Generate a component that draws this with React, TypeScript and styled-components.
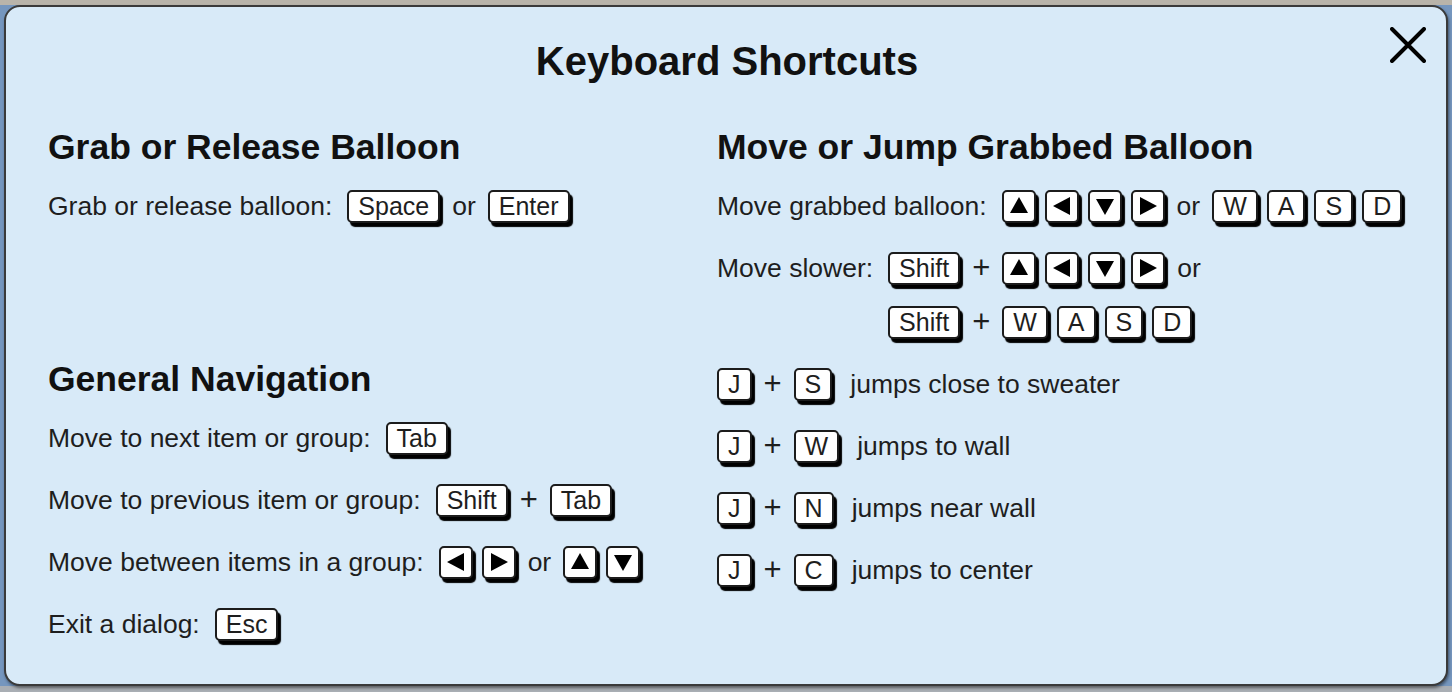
import React from "react";
import styled, { createGlobalStyle } from "styled-components";

const GlobalStyle = createGlobalStyle`
  html, body {
    margin: 0;
    padding: 0;
    background: #7596be;
  }
  body {
    font-family: "Liberation Sans", Arial, sans-serif;
    color: #1e1e1e;
  }
`;

const Backdrop = styled.div`
  box-sizing: border-box;
  width: 1452px;
  height: 692px;
  padding: 5px 4px 6px 4px;
  background: linear-gradient(
    to bottom,
    #b9b4aa 0px,
    #b9b4aa 5px,
    #7596be 5px,
    #7596be 686px,
    #a9aeb4 686px
  );
  overflow: hidden;
`;

const Dialog = styled.div`
  position: relative;
  box-sizing: border-box;
  height: 681px;
  background: #d8eaf8;
  border: 2px solid #3a3a3a;
  border-radius: 16px;
  box-shadow: 1px 2px 3px rgba(0, 0, 0, 0.45);
  padding: 30px 40px 0 42px;
`;

const Title = styled.h1`
  margin: 0;
  text-align: center;
  font-size: 40px;
  line-height: 48px;
  font-weight: 700;
  color: #111;
`;

const CloseButton = styled.button`
  position: absolute;
  top: 20px;
  right: 20px;
  width: 36px;
  height: 36px;
  padding: 0;
  border: none;
  background: transparent;
  display: flex;
  align-items: center;
  justify-content: center;
  cursor: pointer;
`;

const Columns = styled.div`
  display: grid;
  grid-template-columns: 669px 1fr;
  margin-top: 41px;
`;

const Column = styled.div`
  display: flex;
  flex-direction: column;
  gap: 134px;
`;

const Section = styled.section`
  display: flex;
  flex-direction: column;
`;

const Heading = styled.h2`
  margin: 0 0 20px 0;
  font-size: 35.5px;
  line-height: 42px;
  font-weight: 700;
  color: #111;
`;

const Rows = styled.div`
  display: flex;
  flex-direction: column;
  gap: 26px;
`;

const Row = styled.div<{ $top?: boolean }>`
  display: flex;
  align-items: ${(p) => (p.$top ? "flex-start" : "center")};
  gap: 12px;
  min-height: 36px;
  font-size: 26.5px;
  line-height: 30px;
  white-space: nowrap;
`;

const Label = styled.span<{ $top?: boolean }>`
  margin-right: 3px;
  margin-top: ${(p) => (p.$top ? "3px" : "0")};
`;

const Word = styled.span`
  font-size: 26.5px;
`;

const Plus = styled.span`
  font-size: 31px;
  font-weight: 400;
  color: #1e1e1e;
`;

const Description = styled.span`
  margin-left: 6px;
`;

const Lines = styled.div`
  display: flex;
  flex-direction: column;
  gap: 18px;
`;

const Line = styled.div`
  display: flex;
  align-items: center;
  gap: 12px;
  min-height: 36px;
`;

const KeyGroup = styled.span`
  display: inline-flex;
  align-items: center;
  gap: 9px;
`;

const Key = styled.kbd<{ $arrow?: boolean }>`
  display: inline-flex;
  align-items: center;
  justify-content: center;
  box-sizing: border-box;
  height: 33px;
  width: ${(p) => (p.$arrow ? "34px" : "auto")};
  padding: ${(p) => (p.$arrow ? "0" : "0 9px")};
  border: 2px solid #1c1c1c;
  border-radius: 5px;
  background: #fff;
  box-shadow: 3px 4px 1px #000;
  font-family: "Liberation Sans", Arial, sans-serif;
  font-size: 25px;
  line-height: 1;
  color: #1e1e1e;
`;

type Dir = "up" | "left" | "down" | "right";

const trianglePoints: Record<Dir, string> = {
  up: "0,16 9,0 18,16",
  down: "0,2 18,2 9,18",
  left: "17,0 17,18 0,9",
  right: "1,0 1,18 18,9",
};

const Arrow: React.FC<{ dir: Dir }> = ({ dir }) => (
  <Key $arrow>
    <svg width="18" height="18" viewBox="0 0 18 18" aria-label={dir}>
      <polygon points={trianglePoints[dir]} fill="#000" />
    </svg>
  </Key>
);

const Arrows: React.FC<{ dirs: Dir[] }> = ({ dirs }) => (
  <KeyGroup>
    {dirs.map((d) => (
      <Arrow key={d} dir={d} />
    ))}
  </KeyGroup>
);

const Keys: React.FC<{ keys: string[] }> = ({ keys }) => (
  <KeyGroup>
    {keys.map((k) => (
      <Key key={k}>{k}</Key>
    ))}
  </KeyGroup>
);

const ALL: Dir[] = ["up", "left", "down", "right"];
const WASD = ["W", "A", "S", "D"];

const jumps: [string, string][] = [
  ["S", "jumps close to sweater"],
  ["W", "jumps to wall"],
  ["N", "jumps near wall"],
  ["C", "jumps to center"],
];

export default function App() {
  return (
    <>
      <GlobalStyle />
      <Backdrop>
        <Dialog role="dialog" aria-label="Keyboard Shortcuts">
          <Title>Keyboard Shortcuts</Title>
          <CloseButton aria-label="Close">
            <svg width="36" height="36" viewBox="0 0 36 36">
              <path
                d="M2 2 L34 34 M34 2 L2 34"
                stroke="#000"
                strokeWidth="4"
                strokeLinecap="round"
              />
            </svg>
          </CloseButton>
          <Columns>
            <Column>
              <Section>
                <Heading>Grab or Release Balloon</Heading>
                <Rows>
                  <Row>
                    <Label>Grab or release balloon:</Label>
                    <Key>Space</Key>
                    <Word>or</Word>
                    <Key>Enter</Key>
                  </Row>
                </Rows>
              </Section>
              <Section>
                <Heading>General Navigation</Heading>
                <Rows>
                  <Row>
                    <Label>Move to next item or group:</Label>
                    <Key>Tab</Key>
                  </Row>
                  <Row>
                    <Label>Move to previous item or group:</Label>
                    <Key>Shift</Key>
                    <Plus>+</Plus>
                    <Key>Tab</Key>
                  </Row>
                  <Row>
                    <Label>Move between items in a group:</Label>
                    <Arrows dirs={["left", "right"]} />
                    <Word>or</Word>
                    <Arrows dirs={["up", "down"]} />
                  </Row>
                  <Row>
                    <Label>Exit a dialog:</Label>
                    <Key>Esc</Key>
                  </Row>
                </Rows>
              </Section>
            </Column>
            <Column>
              <Section>
                <Heading>Move or Jump Grabbed Balloon</Heading>
                <Rows>
                  <Row>
                    <Label>Move grabbed balloon:</Label>
                    <Arrows dirs={ALL} />
                    <Word>or</Word>
                    <Keys keys={WASD} />
                  </Row>
                  <Row $top>
                    <Label $top>Move slower:</Label>
                    <Lines>
                      <Line>
                        <Key>Shift</Key>
                        <Plus>+</Plus>
                        <Arrows dirs={ALL} />
                        <Word>or</Word>
                      </Line>
                      <Line>
                        <Key>Shift</Key>
                        <Plus>+</Plus>
                        <Keys keys={WASD} />
                      </Line>
                    </Lines>
                  </Row>
                  {jumps.map(([k, text]) => (
                    <Row key={k}>
                      <Key>J</Key>
                      <Plus>+</Plus>
                      <Key>{k}</Key>
                      <Description>{text}</Description>
                    </Row>
                  ))}
                </Rows>
              </Section>
            </Column>
          </Columns>
        </Dialog>
      </Backdrop>
    </>
  );
}
